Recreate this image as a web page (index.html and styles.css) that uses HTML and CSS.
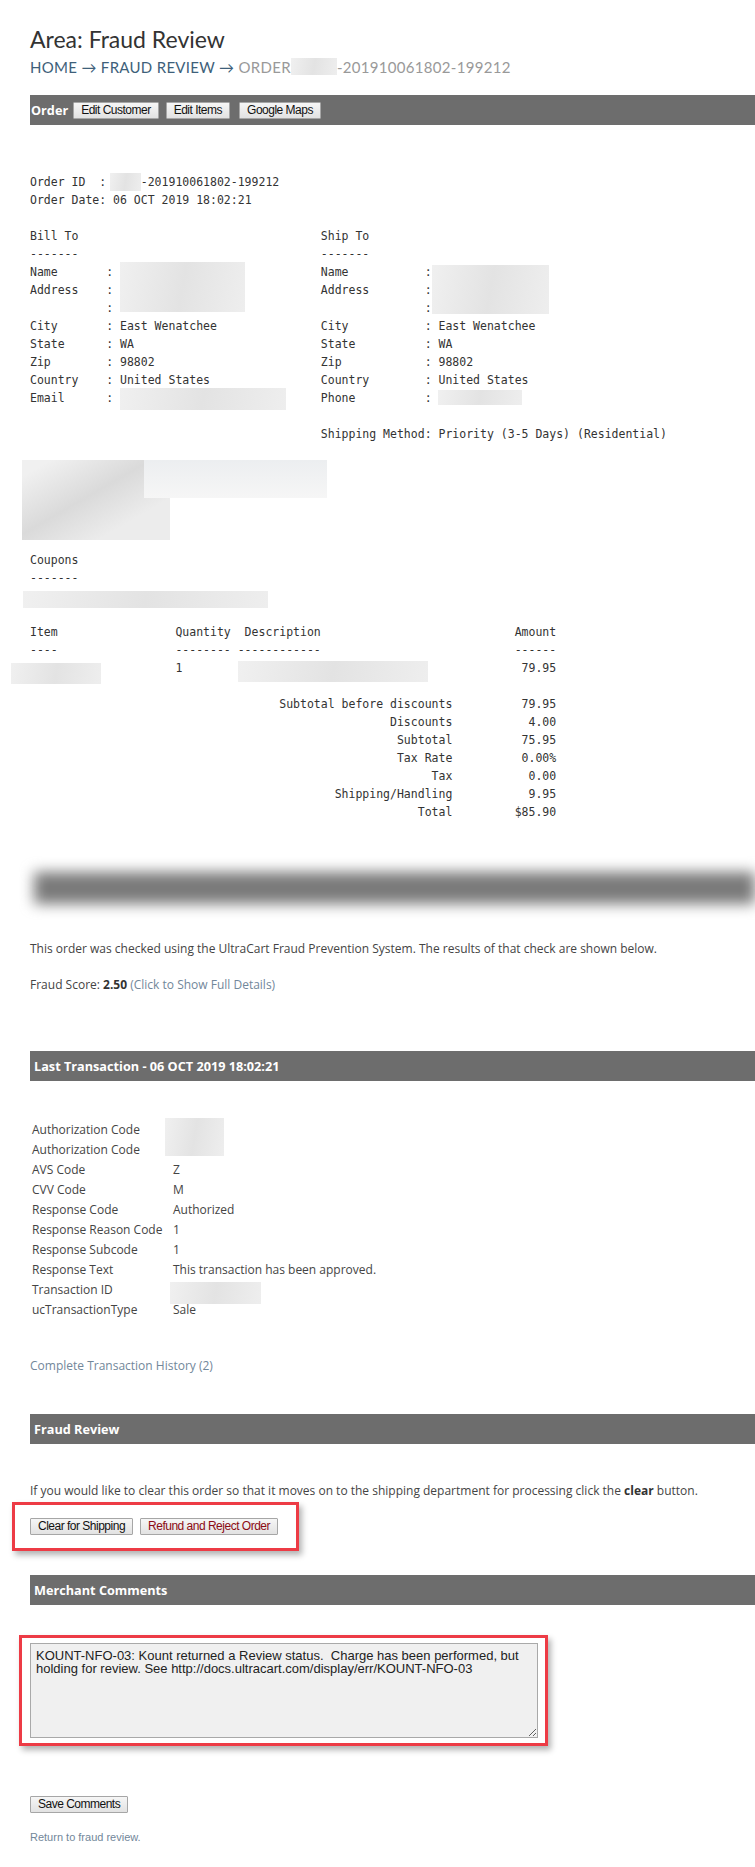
FILE: index.html
```html
<!DOCTYPE html>
<html lang="en">
<head>
  <meta charset="UTF-8">
  <title>Fraud Review</title>
  <link rel="stylesheet" href="styles.css">
</head>
<body>

<div class="page">
  <!-- Header -->
  <h1 class="area-title">Area: Fraud Review</h1>
  <div class="crumbs">
    <a href="#">HOME</a> &rarr; <a href="#">FRAUD REVIEW</a> &rarr; <span class="current">ORDER<span class="smudge crumb-id"></span>-201910061802-199212</span>
  </div>

  <!-- Order -->
  <div class="bar order-bar">
    <span class="bar-title">Order</span>
    <button class="btn">Edit Customer</button>
    <button class="btn btn-items">Edit Items</button>
    <button class="btn btn-maps">Google Maps</button>
  </div>

  <div class="order-meta">
    <div class="mono">Order ID  :<span class="smudge s-oid"></span>-201910061802-199212</div>
    <div class="mono">Order Date: 06 OCT 2019 18:02:21</div>
  </div>

  <div class="addr">
<pre class="mono addr-col">Bill To
-------
Name       : <span class="smudge s-bill-name"></span>
Address    :
           :
City       : East Wenatchee
State      : WA
Zip        : 98802
Country    : United States
Email      : <span class="smudge s-email"></span></pre>
<pre class="mono addr-col">Ship To
-------
Name           :<span class="smudge s-ship-name"></span>
Address        :
               :
City           : East Wenatchee
State          : WA
Zip            : 98802
Country        : United States
Phone          : <span class="smudge s-phone"></span>

Shipping Method: Priority (3-5 Days) (Residential)</pre>
  </div>

  <div class="smudge-block">
    <span class="blob blob-a"></span>
    <span class="blob blob-b"></span>
  </div>

  <pre class="mono coupons">Coupons
-------
<span class="smudge s-coupon"></span></pre>

  <!-- Items -->
  <div class="mono items">
    <span>Item</span><span>Quantity</span><span class="desc-head">Description</span><span>Amount</span>
    <span>----</span><span>--------</span><span>------------</span><span>------</span>
    <span><span class="smudge s-item"></span></span><span>1</span><span><span class="smudge s-desc"></span></span><span>79.95</span>
  </div>

  <div class="mono totals">
    <span>Subtotal before discounts</span><span>79.95</span>
    <span>Discounts</span><span>4.00</span>
    <span>Subtotal</span><span>75.95</span>
    <span>Tax Rate</span><span>0.00%</span>
    <span>Tax</span><span>0.00</span>
    <span>Shipping/Handling</span><span>9.95</span>
    <span>Total</span><span>$85.90</span>
  </div>

  <div class="blur-bar"></div>

  <p class="intro">This order was checked using the UltraCart Fraud Prevention System. The results of that check are shown below.</p>
  <p class="score">Fraud Score: <b>2.50</b> <a href="#" class="link">(Click to Show Full Details)</a></p>

  <!-- Last transaction -->
  <div class="bar bar-txn">Last Transaction - 06 OCT 2019 18:02:21</div>
  <div class="txn">
    <span>Authorization Code</span><span class="auth-cell"><span class="smudge s-auth"></span></span>
    <span>Authorization Code</span>
    <span>AVS Code</span><span>Z</span>
    <span>CVV Code</span><span>M</span>
    <span>Response Code</span><span>Authorized</span>
    <span>Response Reason Code</span><span>1</span>
    <span>Response Subcode</span><span>1</span>
    <span>Response Text</span><span>This transaction has been approved.</span>
    <span>Transaction ID</span><span><span class="smudge s-txid"></span></span>
    <span>ucTransactionType</span><span>Sale</span>
  </div>
  <a href="#" class="link history">Complete Transaction History (2)</a>

  <!-- Fraud review -->
  <div class="bar bar-review">Fraud Review</div>
  <p class="clear-note">If you would like to clear this order so that it moves on to the shipping department for processing click the <b>clear</b> button.</p>
  <div class="callout callout-actions">
    <button class="btn">Clear for Shipping</button>
    <button class="btn btn-reject">Refund and Reject Order</button>
  </div>

  <!-- Comments -->
  <div class="bar bar-comments">Merchant Comments</div>
  <div class="callout callout-comments">
    <textarea class="comments">KOUNT-NFO-03: Kount returned a Review status.  Charge has been performed, but holding for review. See http://docs.ultracart.com/display/err/KOUNT-NFO-03</textarea>
  </div>

  <button class="btn btn-save">Save Comments</button>
  <a href="#" class="link return">Return to fraud review.</a>
</div>

</body>
</html>
```

FILE: styles.css
```css
* {
  box-sizing: border-box;
}
body {
  margin: 0;
  background-color: #fff;
  font-family: "Open Sans", sans-serif;
  font-size: 12px;
  color: #444;
}
a {
  text-decoration: none;
}
.page {
  padding: 26px 0 0 30px;
}

/* HEADER */
.area-title {
  margin: 0;
  font: 400 23px/27px Lato, sans-serif;
  color: #333;
}
.crumbs {
  margin-top: 5px;
  font: 15px/18px Lato, sans-serif;
  letter-spacing: 0.3px;
  color: #3e5f7a;
}
.crumbs a {
  color: #3e5f7a;
}
.crumbs .current {
  color: #999;
}
.crumb-id {
  width: 46px;
  height: 17px;
  vertical-align: -3px;
}

/* SECTION BARS */
.bar {
  display: flex;
  align-items: center;
  height: 30px;
  padding-left: 4px;
  background-color: #6d6d6d;
  color: #fff;
  font-weight: bold;
  font-size: 12.7px;
}
.order-bar {
  margin-top: 19px;
  padding-left: 1px;
}
.order-bar .bar-title {
  margin-right: 5px;
}
.btn-items {
  margin-left: 7px;
}
.btn-maps {
  margin-left: 9px;
}

/* BUTTONS */
.btn {
  flex-shrink: 0;
  height: 17px;
  padding: 0 7px;
  border: 1px solid #a6a6a6;
  border-radius: 1px;
  background: linear-gradient(#f6f6f6, #e2e2e2);
  font: 12px/15px "Liberation Sans", Arial, sans-serif;
  letter-spacing: -0.5px;
  color: #111;
  white-space: nowrap;
}
.btn-reject {
  color: #8c0b14;
}

/* RECEIPT (MONOSPACE) */
.mono {
  margin: 0;
  font-family: "DejaVu Sans Mono", monospace;
  font-size: 11.5px;
  line-height: 18px;
  color: #333;
  white-space: pre;
}
.order-meta {
  margin-top: 48px;
  margin-bottom: 18px;
}
.addr {
  display: flex;
}
.addr-col {
  width: 42ch;
}
.smudge {
  display: inline-block;
  vertical-align: top;
  background: linear-gradient(100deg, #f0f0f0, #e3e3e3 50%, #eeeeee);
}
.s-oid {
  width: 4.5ch;
  height: 18px;
  margin-left: 0.5ch;
}
.s-bill-name {
  width: 18ch;
  height: 50px;
  margin-top: -1px;
  margin-bottom: -33px;
}
.s-ship-name {
  width: 17ch;
  height: 49px;
  margin-top: 2px;
  margin-bottom: -33px;
}
.s-email {
  width: 24ch;
  height: 22px;
  margin-top: -1px;
  margin-bottom: -5px;
}
.s-phone {
  width: 12ch;
  height: 15px;
  margin-top: 1px;
}
.smudge-block {
  display: flex;
  align-items: flex-start;
  height: 80px;
  margin: 17px 0 11px -8px;
}
.blob-a {
  width: 148px;
  height: 80px;
  background: linear-gradient(150deg, #f0f0f0 10%, #dadada 45%, #ececec 75%);
}
.blob-b {
  width: 183px;
  height: 38px;
  margin-left: -26px;
  background: linear-gradient(#eceef0, #f6f6f6);
}
.coupons {
  margin-bottom: 18px;
}
.s-coupon {
  width: 245px;
  height: 17px;
  margin-left: -7px;
  margin-top: 4px;
  margin-bottom: -3px;
}
.items {
  display: grid;
  grid-template-columns: 21ch 9ch 40ch 6ch;
  grid-auto-rows: 18px;
}
.items > span:nth-child(4n) {
  text-align: right;
}
.items .desc-head {
  padding-left: 1ch;
}
.s-item {
  width: 90px;
  height: 21px;
  margin-left: -19px;
  margin-top: 4px;
}
.s-desc {
  width: 190px;
  height: 21px;
  margin-top: 2px;
}
.totals {
  display: grid;
  grid-template-columns: 61ch 15ch;
  grid-auto-rows: 18px;
  margin-top: 18px;
  text-align: right;
}
.blur-bar {
  height: 32px;
  margin: 51px 0 0 4px;
  background-color: #7a7a7a;
  filter: blur(7px);
}

/* FRAUD CHECK */
.intro,
.score,
.clear-note {
  margin: 0;
  line-height: 18px;
}
.intro {
  margin-top: 36px;
}
.score {
  margin-top: 18px;
}
.score b,
.clear-note b {
  color: #333;
}
.link {
  color: #72879a;
}

/* LAST TRANSACTION */
.bar-txn {
  margin-top: 57px;
}
.txn {
  display: grid;
  grid-template-columns: 141px auto;
  grid-auto-rows: 20px;
  margin-top: 39px;
  line-height: 20px;
}
.txn > span {
  padding-left: 2px;
}
.auth-cell {
  grid-row: span 2;
}
.s-auth {
  width: 59px;
  height: 38px;
  margin-left: -8px;
  margin-top: -2px;
}
.s-txid {
  width: 91px;
  height: 22px;
  margin-left: -3px;
  margin-top: 2px;
}
.history {
  display: block;
  margin-top: 37px;
  line-height: 18px;
}

/* FRAUD REVIEW */
.bar-review {
  margin-top: 39px;
}
.clear-note {
  margin-top: 38px;
}
.callout {
  border: 3px solid #ed3b45;
  box-shadow: 3px 4px 6px rgba(0,0,0,0.3);
}
.callout-actions {
  display: flex;
  gap: 7px;
  width: 287px;
  margin: 2px 0 0 -18px;
  padding: 13px 0 13px 15px;
}

/* MERCHANT COMMENTS */
.bar-comments {
  margin-top: 24px;
}
.callout-comments {
  width: 529px;
  margin: 30px 0 0 -11px;
  padding: 5px 7px 5px 8px;
}
.comments {
  display: block;
  width: 508px;
  height: 95px;
  margin: 0;
  padding: 5px 5px;
  border: 1px solid #a9a9a9;
  background-color: #f0f0f0;
  font: 13px/13px "Liberation Sans", Arial, sans-serif;
  color: #222;
}
.btn-save {
  display: block;
  margin-top: 50px;
}
.return {
  display: block;
  margin-top: 17px;
  font: 11px/14px "Liberation Sans", Arial, sans-serif;
}
```
